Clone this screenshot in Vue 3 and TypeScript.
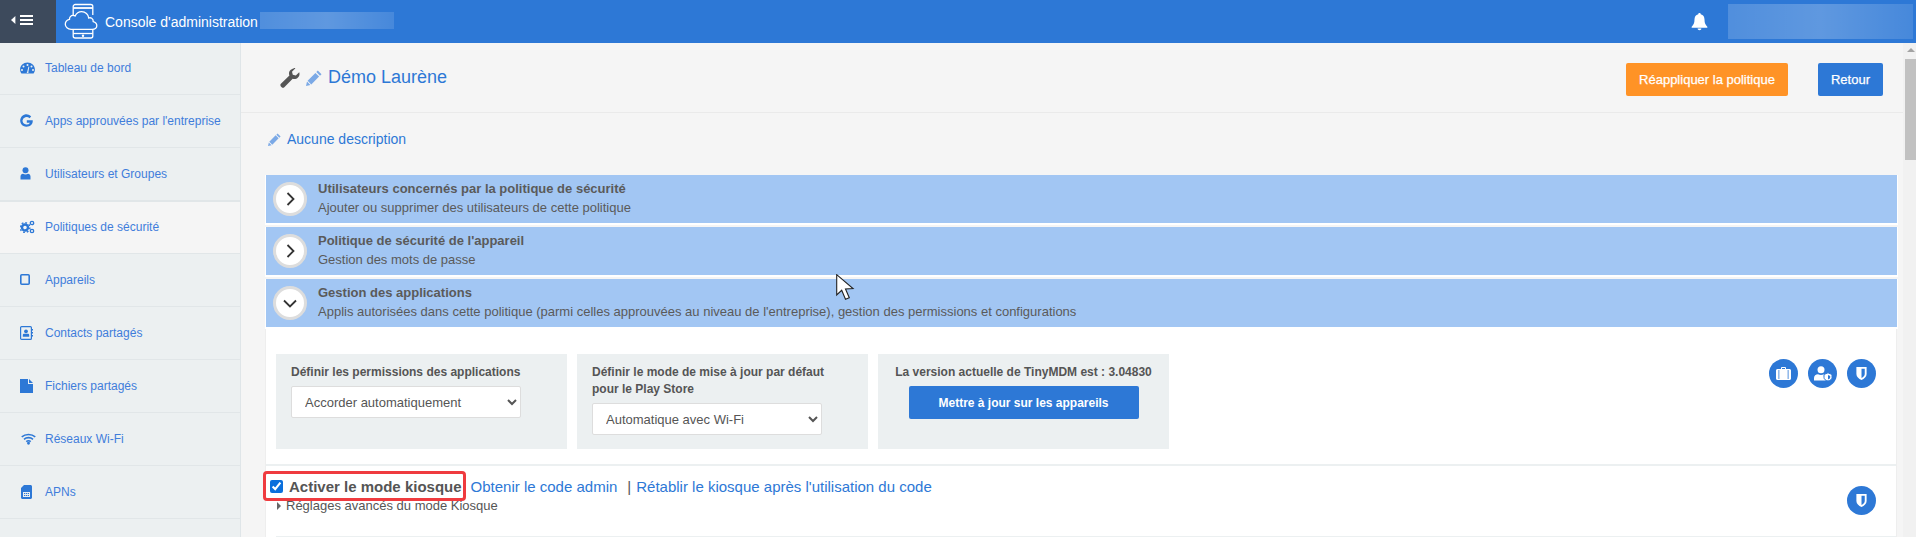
<script setup lang="ts">
interface NavItem { label: string; icon: string; active?: boolean }
const nav: NavItem[] = [
  { label: 'Tableau de bord', icon: 'gauge' },
  { label: "Apps approuvées par l'entreprise", icon: 'g' },
  { label: 'Utilisateurs et Groupes', icon: 'user' },
  { label: 'Politiques de sécurité', icon: 'cogs', active: true },
  { label: 'Appareils', icon: 'tablet' },
  { label: 'Contacts partagés', icon: 'contact' },
  { label: 'Fichiers partagés', icon: 'file' },
  { label: 'Réseaux Wi-Fi', icon: 'wifi' },
  { label: 'APNs', icon: 'sim' },
  { label: '', icon: '' },
]
const panels = [
  { title: 'Utilisateurs concernés par la politique de sécurité', sub: 'Ajouter ou supprimer des utilisateurs de cette politique', open: false },
  { title: "Politique de sécurité de l'appareil", sub: 'Gestion des mots de passe', open: false },
  { title: 'Gestion des applications', sub: "Applis autorisées dans cette politique (parmi celles approuvées au niveau de l'entreprise), gestion des permissions et configurations", open: true },
]
</script>

<template>
  <div class="page">
    <header class="top">
      <div class="toggle">
        <svg width="22" height="10" viewBox="0 0 22 10">
          <path d="M4.400 1v8L0 5z" fill="#fff" />
          <path d="M9 0h13v2H9zM9 4h13v2H9zM9 8h13v2H9z" fill="#fff" />
        </svg>
      </div>
      <svg class="logo" width="36" height="38" viewBox="0 0 36 38" fill="none" stroke="#fff" stroke-width="1.300">
        <path d="M9.200 12V3.500a2 2 0 0 1 2-2h15.600a2 2 0 0 1 2 2V12" />
        <path d="M9.200 5h19.600" stroke-width="1.800" />
        <path d="M9.200 25v8a2 2 0 0 0 2 2h15.600a2 2 0 0 0 2-2v-8" />
        <path d="M9.200 30.500h19.600" stroke-width="1.300" />
        <path d="M7 26.300c-3.200 0-5.700-2.200-5.700-5 0-2.500 1.800-4.500 4.200-5-.2-2.100 1.400-3.900 3.500-3.900.8 0 1.500.2 2.100.6 1.200-2.600 3.700-4.300 6.600-4.300 3.700 0 6.700 2.800 7 6.300 1-.4 2.100-.3 3 .3 1.200.8 1.700 2 1.500 3.300 2.100.5 3.600 2.300 3.600 4.200 0 2-2 3.500-4.700 3.500z" fill="#2d78d6" />
        <circle cx="19" cy="32.800" r="1.200" fill="#fff" stroke="none" />
      </svg>
      <span class="console">Console d'administration</span>
      <span class="blur blur-a"></span>
      <svg class="bell" width="17" height="19" viewBox="0 0 18 19">
        <path d="M9 0.500c.8 0 1.300.5 1.300 1.300 2.700.6 4 2.800 4 5.500 0 4 1 5.600 3 7.700v1H.7v-1c2-2.100 3-3.700 3-7.700 0-2.700 1.300-4.900 4-5.500C7.700 1 8.200.5 9 .5zM7 17h4c0 1-.9 1.700-2 1.700S7 18 7 17z" fill="#fff" />
      </svg>
      <span class="blur blur-b"></span>
    </header>

    <div class="shell">
      <nav class="side">
        <a v-for="(n, i) in nav" :key="i" class="nav" :class="{ on: n.active }">
          <span class="ico">
            <svg v-if="n.icon === 'gauge'" width="15" height="12" viewBox="0 0 15 12"><path fill-rule="evenodd" d="M7.500.500C3.400.500.100 3.600.100 7.500c0 1.500.5 2.900 1.300 4h12.200c.8-1.100 1.300-2.500 1.300-4 0-3.900-3.300-7-7.400-7zM7.500 2a1 1 0 1 1 0 2 1 1 0 0 1 0-2zM3.500 3.500a1 1 0 1 1 0 2 1 1 0 0 1 0-2zM11.500 3.500a1 1 0 1 1 0 2 1 1 0 0 1 0-2zM2 7a1 1 0 1 1 0 2 1 1 0 0 1 0-2zM13 7a1 1 0 1 1 0 2 1 1 0 0 1 0-2zM7 10.500l1.500-6 .8.200-1 5.900c.3.300.3.400.3.400H6.500c0 0 .2-.3.500-.5z" fill="#2d78d6" /></svg>
            <svg v-else-if="n.icon === 'g'" width="13" height="13" viewBox="0 0 13 13"><path d="M11.200 2.600 9.500 4.200A4.100 4.100 0 0 0 2.500 6.500a4.100 4.100 0 0 0 7.500 2.200H6.800V6.200h5.900c.5 3.700-2 6.500-6.200 6.500a6.200 6.200 0 1 1 4.700-10.100z" fill="#2d78d6" /></svg>
            <svg v-else-if="n.icon === 'user'" width="11" height="13" viewBox="0 0 11 13"><circle cx="5.500" cy="3.300" r="3" fill="#2d78d6" /><path d="M0.500 12.500V9.500C.5 8 1.700 6.800 3 6.800c1.500 1 3.500 1 5 0 1.300 0 2.500 1.200 2.500 2.700v3z" fill="#2d78d6" /></svg>
            <svg v-else-if="n.icon === 'cogs'" width="15" height="14" viewBox="0 0 15 14"><circle cx="5" cy="7.500" r="3" fill="none" stroke="#2d78d6" stroke-width="2.400" /><circle cx="5" cy="7.500" r="4.900" fill="none" stroke="#2d78d6" stroke-width="1.400" stroke-dasharray="1.800 2" /><circle cx="12" cy="3" r="1.700" fill="none" stroke="#2d78d6" stroke-width="1.300" /><circle cx="12" cy="11" r="1.700" fill="none" stroke="#2d78d6" stroke-width="1.300" /></svg>
            <svg v-else-if="n.icon === 'tablet'" width="10" height="11" viewBox="0 0 10 11"><rect x=".8" y=".8" width="8.400" height="9.400" rx="1" fill="none" stroke="#2d78d6" stroke-width="1.600" /></svg>
            <svg v-else-if="n.icon === 'contact'" width="13" height="14" viewBox="0 0 13 14"><rect x=".6" y=".6" width="10.800" height="12.800" rx="1" fill="none" stroke="#2d78d6" stroke-width="1.200" /><circle cx="6" cy="5.300" r="1.900" fill="#2d78d6" /><path d="M2.800 10.800V9c0-.8.700-1.300 1.400-1.300h3.600c.7 0 1.400.5 1.400 1.300v1.800zM12 3h1v1.500h-1zM12 6h1v1.500h-1zM12 9h1v1.500h-1z" fill="#2d78d6" /></svg>
            <svg v-else-if="n.icon === 'file'" width="13" height="14" viewBox="0 0 13 14"><path d="M0 0h8v5h5v9H0zM9 0l4 4H9z" fill="#2d78d6" /></svg>
            <svg class="shift" v-else-if="n.icon === 'wifi'" width="15" height="12" viewBox="0 0 16 12" fill="none" stroke="#2d78d6" stroke-width="1.700"><path d="M.8 3.800c4-3.500 10.400-3.500 14.400 0M3.200 6.300c2.700-2.300 6.900-2.300 9.600 0M5.600 8.800c1.400-1.100 3.400-1.100 4.800 0" /><circle cx="8" cy="10.600" r=".7" fill="#2d78d6" /></svg>
            <svg class="shift" v-else-if="n.icon === 'sim'" width="11" height="14" viewBox="0 0 11 14"><path fill-rule="evenodd" d="M3 0h6.500C10.300 0 11 .7 11 1.500v11c0 .8-.7 1.500-1.500 1.500h-8C.7 14 0 13.300 0 12.500V3zM2 7v5h7V7zM3 8h1.300v1H3zM5 8h1.300v1H5zM7 8h1v1H7zM3 10h1.300v1H3zM5 10h1.300v1H5zM7 10h1v1H7z" fill="#2d78d6" /></svg>
          </span>
          <span>{{ n.label }}</span>
        </a>
      </nav>

      <main class="main">
        <section class="head">
          <svg class="wrench" width="20" height="20" viewBox="0 0 20 20"><path d="M14.200.400c-2.900 0-5.200 2.300-5.200 5.100 0 .7.100 1.300.4 1.900L.9 15.800c-.7.700-.7 1.900 0 2.600l.8.800c.7.700 1.900.7 2.600 0l8.400-8.500c.5.200 1 .3 1.600.3 2.900 0 5.200-2.300 5.200-5.100 0-.6-.1-1.100-.3-1.700l-3.400 3.300-3-.8-.8-3 3.400-3.400c-.7-.3-1.300-.4-2-.4z" fill="#555" /></svg>
          <svg class="pencil big" width="16" height="16" viewBox="0 0 16 16"><path d="M11.800.500 15.500 4.200 14 5.700 10.300 2zM9.400 2.900l3.700 3.700-7.800 7.800-3.700-3.700zM1 11.600l3.400 3.400L0 16z" fill="#7ba9e6" /></svg>
          <h1 class="title">Démo Laurène</h1>
          <button class="btn orange">Réappliquer la politique</button>
          <button class="btn blue retour">Retour</button>
        </section>

        <div class="desc">
          <svg class="pencil" width="13" height="13" viewBox="0 0 16 16"><path d="M11.800.500 15.500 4.200 14 5.700 10.300 2zM9.400 2.900l3.700 3.700-7.800 7.800-3.700-3.700zM1 11.600l3.400 3.400L0 16z" fill="#7ba9e6" /></svg>
          <span>Aucune description</span>
        </div>

        <div class="panels">
          <div v-for="p in panels" :key="p.title" class="panel">
            <span class="circle">
              <svg v-if="!p.open" width="9" height="14" viewBox="0 0 9 14"><path d="M1.500 1 7.500 7 1.500 13" fill="none" stroke="#333" stroke-width="1.800" /></svg>
              <svg v-else width="14" height="9" viewBox="0 0 14 9"><path d="M1 1.500 7 7.500 13 1.500" fill="none" stroke="#333" stroke-width="1.800" /></svg>
            </span>
            <div class="ptext">
              <strong>{{ p.title }}</strong>
              <span>{{ p.sub }}</span>
            </div>
          </div>

          <div class="body">
            <div class="row-boxes">
              <div class="box">
                <label>Définir les permissions des applications</label>
                <select class="sel"><option>Accorder automatiquement</option></select>
              </div>
              <div class="box">
                <label>Définir le mode de mise à jour par défaut pour le Play Store</label>
                <select class="sel"><option>Automatique avec Wi-Fi</option></select>
              </div>
              <div class="box center">
                <label>La version actuelle de TinyMDM est : 3.04830</label>
                <button class="btn blue wide">Mettre à jour sur les appareils</button>
              </div>
              <div class="rounds">
                <span class="round">
                  <svg width="15" height="13" viewBox="0 0 15 13"><path fill-rule="evenodd" d="M5 2V1a1 1 0 0 1 1-1h3a1 1 0 0 1 1 1v1h3.500c.8 0 1.500.7 1.500 1.500v8c0 .8-.7 1.500-1.500 1.500h-12C.7 13 0 12.300 0 11.500v-8C0 2.700.7 2 1.500 2zM6 1v1h3V1zM2.500 3v9h.8V3zM11.700 3v9h.8V3z" fill="#fff" /></svg>
                </span>
                <span class="round">
                  <svg width="18" height="15" viewBox="0 0 18 15"><circle cx="7" cy="3.800" r="3.500" fill="#fff" /><path d="M0 14.500V12C0 9.800 1.800 8.300 4 8.300c2 1 4 1 6 0 .6 0 1.200.1 1.800.4V14.500z" fill="#fff" /><path d="M14 6.800 18 8.500v3c0 1.800-1.700 3-4 3.500-2.300-.5-4-1.700-4-3.500v-3z" fill="#fff" stroke="#2d78d6" stroke-width="1" /><path d="M14 9 16.200 10v1.500c0 .9-1 1.500-2.200 1.900z" fill="#2d78d6" /></svg>
                </span>
                <span class="round">
                  <svg width="11" height="13" viewBox="0 0 11 14"><path d="M0 0h11v7.500C11 10.500 8.500 12.500 5.500 14 2.500 12.500 0 10.500 0 7.500zM5.500 2v9.900C7.500 10.800 9 9.500 9 7.500V2z" fill="#fff" fill-rule="evenodd" /></svg>
                </span>
              </div>
            </div>

            <div class="kiosk">
              <div class="kiosk-text">
                <div class="kline">
                  <span class="framed">
                    <input type="checkbox" checked class="chk" />
                    <b>Activer le mode kiosque</b>
                  </span>
                  <a class="lnk">Obtenir le code admin</a>
                  <span class="sep">|</span>
                  <a class="lnk">Rétablir le kiosque après l'utilisation du code</a>
                </div>
                <div class="adv"><i class="tri"></i>Réglages avancés du mode Kiosque</div>
              </div>
              <span class="round low">
                <svg width="11" height="13" viewBox="0 0 11 14"><path d="M0 0h11v7.500C11 10.500 8.500 12.500 5.500 14 2.500 12.500 0 10.500 0 7.500zM5.500 2v9.900C7.500 10.800 9 9.500 9 7.500V2z" fill="#fff" fill-rule="evenodd" /></svg>
              </span>
            </div>
            <div class="rule"></div>
          </div>
        </div>

        <svg class="cursor" width="20" height="28" viewBox="0 0 20 28"><path d="M.7.700V21l5-4.700 3.800 9 3.800-1.600-3.800-8.800 7.500-.3z" fill="#fff" stroke="#222" stroke-width="1.100" /></svg>
      </main>

      <div class="scroll">
        <i class="arrow"></i>
        <div class="thumb"></div>
      </div>
    </div>
  </div>
</template>

<style>
html, body { margin: 0; overflow: hidden; }
</style>

<style scoped>
.page { width: 1916px; height: 537px; overflow: hidden; font-family: "Liberation Sans", Arial, sans-serif; background: #f5f5f5; color: #555; }
.top { height: 43px; background: #2d78d6; display: flex; align-items: center; color: #fff; }
.toggle { width: 56px; height: 43px; background: #3d4a5c; display: flex; align-items: center; box-sizing: border-box; padding: 0 0 3px 11px; flex: none; }
.logo { margin-left: 8px; }
.console { font-size: 14px; margin-left: 5px; width: 155px; }
.blur { display: block; background: linear-gradient(90deg, rgba(255,255,255,.17), rgba(255,255,255,.24), rgba(255,255,255,.12)); }
.blur-a { width: 134px; height: 17px; margin-bottom: 2px; }
.bell { margin-left: auto; margin-right: 20px; }
.blur-b { width: 185px; height: 35px; margin-right: 3px; }
.shell { display: flex; height: 494px; }
.side { width: 241px; flex: none; background: #ecf0f1; border-right: 1px solid #dfe5e8; box-sizing: border-box; }
.nav { height: 53px; display: flex; align-items: center; border-bottom: 1px solid #e1e6e8; box-sizing: border-box; font-size: 12px; color: #3f7ddb; padding-bottom: 1px; }
.nav:first-child { height: 52px; padding-bottom: 2px; }
.nav.on { background: #f5f5f5; border-top: 1px solid #e1e6e8; }
.ico { width: 25px; margin-left: 20px; display: flex; align-items: center; }
.shift { margin-left: 1px; }
.main { flex: 1; position: relative; min-width: 0; }
.head { height: 70px; border-bottom: 1px solid #eaeaea; box-sizing: border-box; display: flex; align-items: center; padding: 0 20px 0 39px; }
.wrench { margin-right: 6px; }
.pencil.big { margin-right: 6px; }
.title { font-weight: 400; font-size: 18px; color: #2d78d6; margin: 0; }
.btn { border: 0; border-radius: 2px; color: #fff; font-family: inherit; font-size: 13px; padding: 0; height: 33px; }
.orange { background: #ff9326; width: 162px; margin: 4px 0 0 auto; -webkit-text-stroke: .25px #fff; }
.blue { background: #2d78d6; }
.retour { width: 65px; margin: 4px 0 0 30px; -webkit-text-stroke: .25px #fff; }
.desc { display: flex; align-items: center; font-size: 14px; color: #2d78d6; padding: 8px 0 0 27px; height: 44px; box-sizing: border-box; gap: 6px; }
.panels { margin: 18px 5px 0 24px; }
.panel { height: 50px; box-sizing: border-box; border: 1px solid #fff; border-width: 0 1px 2px; background: #a2c6f3; display: flex; align-items: center; margin-bottom: 2px; }
.circle { width: 34px; height: 34px; border: 3px solid #ddd; box-sizing: border-box; border-radius: 50%; background: #fff; display: flex; align-items: center; justify-content: center; margin: 0 11px 0 7px; flex: none; }
.ptext { display: flex; flex-direction: column; gap: 4px; font-size: 13px; line-height: 15px; color: #5a5a5a; padding-bottom: 3px; }
.ptext strong { font-size: 13px; }
.body { background: #fff; margin: -2px 1px 0 0; border-right: 1px solid #eee; border-left: 1px solid #eee; }
.row-boxes { display: flex; align-items: flex-start; padding: 25px 20px 15px 10px; border-bottom: 2px solid #ecf0f1; }
.box { width: 291px; height: 95px; background: #ecf0f1; margin-right: 10px; padding: 10px 15px 0; box-sizing: border-box; flex: none; }
.box label { display: block; font-size: 12px; font-weight: 700; line-height: 17px; color: #555; margin-bottom: 5px; }
.box.center { text-align: center; }
.sel { display: block; width: 230px; height: 32px; background: #fff; border: 1px solid #ddd; border-radius: 2px; font-family: inherit; font-size: 13px; color: #555; padding: 0 9px; box-sizing: border-box; }
.wide { width: 230px; font-weight: 700; font-size: 12px; display: block; margin: 0 auto; }
.rounds { margin-left: auto; display: flex; gap: 10px; padding-top: 5px; }
.round { width: 29px; height: 29px; border-radius: 50%; background: #2d78d6; display: inline-flex; align-items: center; justify-content: center; flex: none; }
.low { margin-top: 9px; }
.kiosk { display: flex; justify-content: space-between; align-items: flex-start; padding: 11px 20px 0 4px; height: 70px; box-sizing: border-box; }
.kline { display: flex; align-items: center; font-size: 15px; height: 18px; }
.framed { position: relative; display: flex; align-items: center; }
.framed::after { content: ""; position: absolute; left: -7px; top: -7px; width: 203px; height: 30px; border: 3px solid #ef3b3f; border-radius: 4px; box-sizing: border-box; }
.chk { margin: 0 6px 0 0; width: 13px; height: 13px; accent-color: #0a6fdc; }
.framed b { font-size: 15px; color: #555; margin-right: 9px; }
.lnk { color: #2d78d6; }
.sep { margin: 0 5px 0 10px; color: #555; }
.adv { font-size: 13px; color: #555; margin: 3px 0 0 7px; display: flex; align-items: center; }
.tri { width: 0; height: 0; border-left: 4px solid #666; border-top: 4px solid transparent; border-bottom: 4px solid transparent; margin-right: 5px; }
.rule { height: 1px; background: #ecf0f1; margin-left: 10px; }
.cursor { position: absolute; left: 595px; top: 231px; }
.scroll { width: 13px; flex: none; background: #f1f1f1; position: relative; }
.arrow { position: absolute; left: 4px; top: 5px; width: 0; height: 0; border-left: 4px solid transparent; border-right: 4px solid transparent; border-bottom: 4px solid #a3a3a3; }
.thumb { position: absolute; left: 2px; right: 0; top: 16px; height: 101px; background: #c1c1c1; }
</style>
